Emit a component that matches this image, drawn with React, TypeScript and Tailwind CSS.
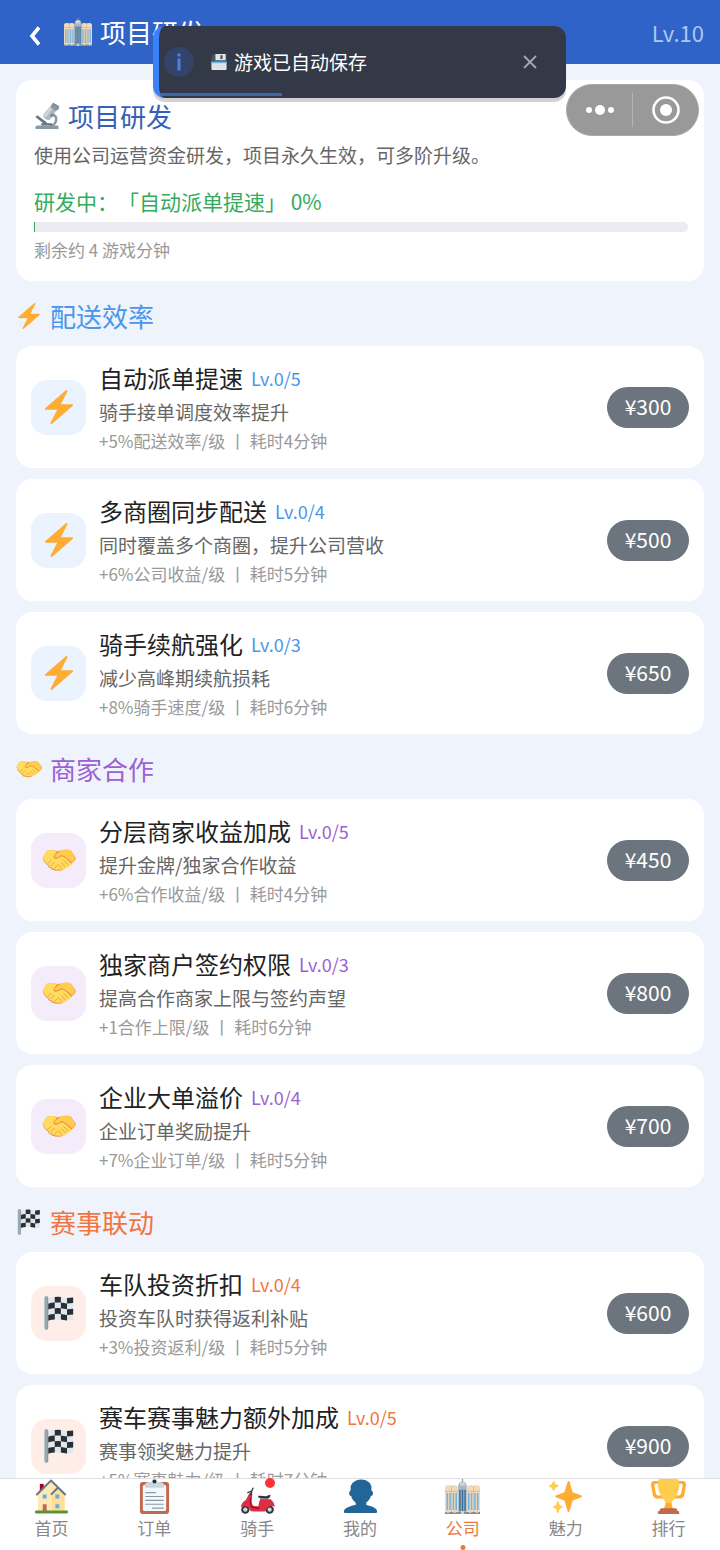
import type { ReactNode } from "react";

interface IconProps {
  className?: string;
}

interface Project {
  name: string;
  level: string;
  desc: string;
  effect: string;
  price: number;
}

interface ProjectGroup {
  title: string;
  icon: (props: IconProps) => ReactNode;
  textClass: string;
  tileClass: string;
  projects: Project[];
}

function Emoji({ className, children }: IconProps & { children: ReactNode }) {
  return (
    <svg viewBox="0 0 36 36" className={`shrink-0 ${className ?? ""}`} aria-hidden="true">
      {children}
    </svg>
  );
}

function BoltIcon({ className }: IconProps) {
  return (
    <Emoji className={className}>
      <path
        fill="#FFAC33"
        d="M32.938 15.651C32.792 15.26 32.418 15 32 15H19.925L26.89 1.458c.219-.426.106-.947-.271-1.243C26.437.071 26.218 0 26 0c-.233 0-.466.082-.653.243L18 6.588 3.347 19.243c-.316.273-.43.714-.284 1.105S3.582 21 4 21h12.075L9.11 34.542c-.219.426-.106.947.271 1.243.182.144.401.215.619.215.233 0 .466-.082.653-.243L18 29.412l14.653-12.655c.317-.273.43-.714.285-1.106z"
      />
    </Emoji>
  );
}

function HandshakeIcon({ className }: IconProps) {
  return (
    <Emoji className={className}>
      <path
        fill="#EF9645"
        d="M5 8.5Q9 6.5 14 8l4 .8 4-1Q27 6.300 31 8.500l4.500 6.500q.8 3-2.500 5.500l-3.500 2q-1 3-3.500 3-1.500 2.500-4 2.500-2 2.200-5 1-2 1.200-4-.5-3 .5-4-2-2.500-.3-3-3Q1.500 20.500.6 15.500z"
      />
      <path
        fill="#FFDC5D"
        d="M5.500 8Q10 6.500 16 8.500l-3.500 5.500q-.8 2.500 2 2.500 3 0 5.500-2.500 3 0 5.500 2.500l6 5.500q.3 2.200-2.500 1.800.3 2.500-3 2.200-.8 2.500-4 1.500-1.500 1.500-4.500.3-1.800 1.200-4-.3-2.500.5-3.500-1.800-2.800 0-3-2.500Q1.500 19.500.8 15z"
      />
      <path
        fill="#FFCC4D"
        d="M30.500 7.800Q25 6 19.500 8.200L13.500 12.500q-1 2.500 1.500 3 3-.3 5-2.500 3.500.2 6 2.500l6 5q2.800-1.800 3-5z"
      />
      <path
        fill="none"
        stroke="#EF9645"
        strokeWidth="1"
        strokeLinecap="round"
        d="M18.500 8.500l-5.500 4.500q-1 2.500 1.500 3 3.500 0 5.500-2.500 3.500.3 5.500 2.500l5.500 5M23 18.500l4.500 4.500M20.500 21l4 4M17.500 23l3 3.500M6.500 21.500l3-3M9.500 24l3.500-3.500M13.500 26.500l2.500-2.500"
      />
    </Emoji>
  );
}

function FlagIcon({ className }: IconProps) {
  return (
    <Emoji className={className}>
      <path
        fill="#E1E8ED"
        d="M6 2.400Q10 1 13.500 1 17 .5 20 1q3 .5 6.500 1 3.500 0 6.500-.5v24q-3 .5-6.500.5-3.500-.5-6.500-1-3-.5-6.500 0-3.500 0-7.500 1.400z"
      />
      <path
        fill="#292F33"
        d="M13.500 1Q17 .5 20 1v6q-3-.5-6.500 0zM26.500 2q3.500 0 6.500-.5v6q-3 .5-6.500.5zM6.500 8.200Q10 7 13.500 7v6q-3.500 0-7 1.200zM20 7q3 .5 6.500 1v6q-3.500-.5-6.500-1zM13.500 13q3.500-.5 6.500 0v6q-3-.5-6.500 0zM26.500 14q3.500 0 6.500-.5v6q-3 .5-6.500.5zM6.500 20.200Q10 19 13.500 19v6q-3.500 0-7 1.200zM20 19q3 .5 6.500 1v6q-3.500-.5-6.500-1z"
      />
      <path fill="#99AAB5" d="M2.500 2q0-2 2-2t2 2v32q0 2-2 2t-2-2z" />
      <path fill="#7C8B96" d="M5.800 1h.7v34h-.7z" />
    </Emoji>
  );
}

function BuildingIcon({ className }: IconProps) {
  return (
    <Emoji className={className}>
      <path fill="#8899A6" d="M17.400 0h1.200v4h-1.200z" />
      <path fill="#AAB8C2" d="M13.500 8q0-5.500 4.500-5.500T22.500 8v28h-9z" />
      <ellipse cx="18" cy="5" rx="3" ry="2" fill="#CCD6DD" />
      <path
        fill="#F1DAB8"
        d="M0 9q0-2 2.500-2.500Q5 6 6.800 7 8.500 6 11 6.400q2.500.6 2.500 2.600v27H0zM22.500 9q0-2 2.500-2.600 2.500-.4 4.200.6 1.800-1 4.300-.5Q36 7 36 9v27H22.500z"
      />
      <path
        fill="#D9B88F"
        d="M0 12h13.500v1H0zM22.500 12H36v1H22.500zM6.500 7h.7v29h-.7zM28.900 7h.7v29h-.7z"
      />
      <path
        fill="#6FB4E6"
        d="M1.500 14.500h1.700V32H1.500zM4.400 14.500h1.500V32H4.400zM7.900 14.500h1.500V32H7.900zM10.700 14.500h1.700V32h-1.700zM23.600 14.500h1.700V32h-1.700zM26.600 14.500h1.500V32h-1.500zM30.100 14.500h1.500V32h-1.500zM32.800 14.500h1.700V32h-1.700z"
      />
      <path fill="#3B6E96" d="M14.600 11h1.500v22h-1.500zM17.200 11h1.600v22h-1.600zM19.900 11h1.500v22h-1.500z" />
      <path fill="#8B8F92" d="M0 34h36v2H0z" />
      <path fill="#CCD6DD" d="M2 33h2v2H2zM9 33h2v2H9zM16.500 33h3v3h-3zM25 33h2v2h-2zM32 33h2v2h-2z" />
    </Emoji>
  );
}

function MicroscopeIcon({ className }: IconProps) {
  return (
    <Emoji className={className}>
      <path fill="#66757F" d="M2 19.500l2.500-2.500L18 27l-2.500 3z" />
      <path
        fill="none"
        stroke="#8899A6"
        strokeWidth="3.500"
        d="M25 15q7 3 5.500 9.500T22 32"
      />
      <path fill="#8899A6" d="M5 31h27q2 0 2 2.500V36H2v-2.500Q2 31 5 31z" />
      <path fill="#66757F" d="M10 28h15v3H10z" />
      <path fill="#AAB8C2" d="M13 16l10-12 8 6-8 12q-3 3-7 0t-3-6z" />
      <path fill="#CCD6DD" d="M14 16l9-11 3 2-9 13q-4-1-3-4z" />
      <path fill="#8899A6" d="M24 2l3-2 8 5-1 4-4 2-7-5z" />
      <path fill="#7A8994" d="M27 0l8 5-2 1-8-5z" />
      <circle cx="25" cy="17" r="2.500" fill="#7A8994" />
    </Emoji>
  );
}

function FloppyIcon({ className }: IconProps) {
  return (
    <Emoji className={className}>
      <path fill="#4A545C" d="M3 3l3-3h26q3 0 3 3v14H1V6z" />
      <path fill="#DCE5EA" d="M10 0h23v14H10z" />
      <path fill="#4A545C" d="M21 3h5v8h-5z" />
      <path fill="#E1E8ED" d="M1 18h34v16q0 2-2 2H3q-2 0-2-2z" />
      <path fill="#6DB8E8" d="M1 17h34v4H1z" />
      <path fill="#C3CFD6" d="M4 26h28v1H4zM4 30h28v1H4z" />
    </Emoji>
  );
}

function HouseIcon({ className }: IconProps) {
  return (
    <Emoji className={className}>
      <path fill="#A0041E" d="M6 5h4v8H6z" />
      <path fill="#FFE8B6" d="M4 16L17 3l14 12v18H4z" />
      <path fill="#FFD983" d="M18 16l6-6 8 7v16H19z" opacity=".6" />
      <path
        fill="none"
        stroke="#66757F"
        strokeWidth="2"
        strokeLinecap="round"
        strokeLinejoin="round"
        d="M3 16L17.500 1.500 32 16M18 15.500l6-6"
      />
      <path fill="#5FB0E0" d="M9 16h4v4H9zM22 16h4v4h-4zM22 26h4v4h-4z" />
      <path fill="#C1694F" d="M9 26h4v7H9z" />
      <path fill="#5C913B" d="M2 32.500h32q1 0 1 1.500t-1 1.500H2Q1 35.500 1 34t1-1.500z" />
    </Emoji>
  );
}

function ClipboardIcon({ className }: IconProps) {
  return (
    <Emoji className={className}>
      <path fill="#C1694F" d="M3 6q0-3 3-3h24q3 0 3 3v27q0 3-3 3H6q-3 0-3-3z" />
      <path fill="#F5F8FA" d="M6 8q0-2 2-2h20q2 0 2 2v23q0 2-2 2H8q-2 0-2-2z" />
      <path fill="#CCD6DD" d="M9 9q-1 0-1-2 0-4 5-4h2q0-3 3-3t3 3h2q5 0 5 4 0 2-1 2z" />
      <circle cx="18" cy="2.500" r="2" fill="#292F33" />
      <path
        fill="none"
        stroke="#8899A6"
        strokeWidth="1.200"
        strokeLinecap="round"
        d="M9 14h10M9 18h18M9 22h18M9 26h18M16 30h11"
      />
    </Emoji>
  );
}

function ScooterIcon({ className }: IconProps) {
  return (
    <Emoji className={className}>
      <circle cx="5.500" cy="31.500" r="4.300" fill="#31373D" />
      <circle cx="5.500" cy="31.500" r="2.200" fill="#CCD6DD" />
      <circle cx="30.500" cy="31.500" r="4.300" fill="#31373D" />
      <circle cx="30.500" cy="31.500" r="2.200" fill="#CCD6DD" />
      <path
        fill="#DD2E44"
        d="M9.500 15q2-1.500 3.200 0l-.7 7.500q0 4.500 2.500 5.300l4.500.2q.5-5.500 2-7.500l10.500.2q4.500 4 4 7.800-3.500-1.500-6.500.3-2.500 1.700-3 4.700H13q-3-.5-3.500-3.500Q7.500 26.500 1 29q0-4.500 5-7.500z"
      />
      <path
        fill="none"
        stroke="#A0041E"
        strokeWidth="1.200"
        strokeLinecap="round"
        d="M11 20q-1 8 2.500 9.500l6 .5"
      />
      <path fill="#31373D" d="M18.500 18.500q0-1.500 2-1.200l6.500.4 4-1.700q1 3-2.500 4.300l-7.500-.3z" />
      <path
        fill="none"
        stroke="#31373D"
        strokeWidth="1.400"
        strokeLinecap="round"
        d="M8 14l4-1.500 1.300-3M12 13.500l-1 3"
      />
    </Emoji>
  );
}

function PersonIcon({ className }: IconProps) {
  return (
    <Emoji className={className}>
      <path
        fill="#226699"
        d="M24 26.799v-2.566c2-1.348 4.080-3.779 4.703-6.896.186.103.206.17.413.17.991 0 1.709-1.287 1.709-2.873 0-1.562-.823-2.827-1.794-2.865.187-.674.293-1.577.293-2.735C29.324 5.168 26 .527 18.541.527c-6.629 0-10.777 4.641-10.777 8.507 0 1.123.069 2.043.188 2.755-.911.137-1.629 1.352-1.629 2.845 0 1.587.804 2.873 1.796 2.873.206 0 .025-.067.209-.17C8.952 20.453 11 22.885 13 24.232v2.414c-5 .645-12 3.437-12 6.230v1.061C1 35 2.076 35 3.137 35h29.725C33.924 35 35 35 35 33.938v-1.061c0-2.615-6-5.225-11-6.078z"
      />
    </Emoji>
  );
}

function SparklesIcon({ className }: IconProps) {
  return (
    <Emoji className={className}>
      <path
        fill="#FFAC33"
        d="M34.347 16.893l-8.899-3.294-3.323-10.891c-.128-.42-.517-.708-.956-.708-.439 0-.828.288-.956.708l-3.322 10.891-8.900 3.294c-.393.146-.653.519-.653.938 0 .418.26.793.653.938l8.895 3.293 3.324 11.223c.126.424.516.715.959.715.442 0 .833-.291.959-.716l3.324-11.223 8.896-3.293c.391-.144.652-.518.652-.937 0-.418-.261-.792-.653-.938z"
      />
      <path
        fill="#FFCC4D"
        d="M14.347 27.894l-2.314-.856-.9-3.300c-.118-.436-.513-.738-.964-.738-.451 0-.846.302-.965.737l-.9 3.300-2.313.856c-.393.146-.653.52-.653.938 0 .418.26.793.653.938l2.301.853.907 3.622c.112.444.511.756.97.756.459 0 .858-.312.97-.757l.907-3.622 2.301-.853c.393-.144.653-.519.653-.937 0-.418-.26-.793-.653-.937zM10.009 6.231l-2.364-.875-.876-2.365c-.145-.393-.519-.653-.938-.653-.418 0-.792.26-.938.653l-.875 2.365-2.365.875c-.393.146-.653.52-.653.938 0 .418.26.793.653.938l2.365.875.875 2.365c.146.393.52.653.938.653.418 0 .792-.26.938-.653l.875-2.365 2.365-.875c.393-.146.653-.52.653-.938 0-.418-.26-.792-.653-.938z"
      />
    </Emoji>
  );
}

function TrophyIcon({ className }: IconProps) {
  return (
    <Emoji className={className}>
      <path
        fill="#FFAC33"
        d="M5.123 5h6C12.227 5 13 4.896 13 6V4c0-1.104-.773-2-1.877-2h-8c-2 0-3.583 2.125-3 5 0 0 1.791 9.375 1.917 9.958C2.373 18.500 4.164 20 6.081 20h6.958c1.105 0-.039-1.896-.039-3v-2c0 1.104-.773 2-1.877 2h-4c-1.104 0-1.833-1.042-2-2S3.539 7.667 3.539 7.667C3.206 5.750 4.018 5 5.123 5zm25.812 0h-6C23.831 5 22 4.896 22 6V4c0-1.104 1.831-2 2.935-2h8c2 0 3.584 2.125 3 5 0 0-1.633 9.419-1.771 10-.354 1.500-2.042 3-4 3h-7.146C21.914 20 22 18.104 22 17v-2c0 1.104 1.831 2 2.935 2h4c1.104 0 1.834-1.042 2-2s1.584-7.333 1.584-7.333C32.851 5.750 32.040 5 30.935 5zM20.832 22c0-6.958-2.709 0-2.709 0s-3-6.958-3 0-3.291 10-3.291 10h12.292c-.001 0-3.292-3.042-3.292-10z"
      />
      <path
        fill="#FFCC4D"
        d="M29.123 6.577c0 6.775-6.770 18.423-11 18.423-4.231 0-11-11.649-11-18.423 0-5.577 1-6.577 3-6.577h16c2 0 3 1 3 6.577z"
      />
      <path
        fill="#C1694F"
        d="M27 33c0 1.104.227 2-.877 2h-16C9.018 35 9 34.104 9 33v-1c0-1.104 1.164-2 2.206-2h13.917c1.042 0 1.877.896 1.877 2v1zM29 34.625c0 .76.165 1.375-1.252 1.375H8.498C7.206 36 7 35.385 7 34.625v-.25C7 33.615 7.738 33 8.498 33h19.250c.759 0 1.252.615 1.252 1.375v.25z"
      />
    </Emoji>
  );
}

const groups: ProjectGroup[] = [
  {
    title: "配送效率",
    icon: BoltIcon,
    textClass: "text-[#4a96ea]",
    tileClass: "bg-[#eaf3fe]",
    projects: [
      { name: "自动派单提速", level: "Lv.0/5", desc: "骑手接单调度效率提升", effect: "+5%配送效率/级 丨 耗时4分钟", price: 300 },
      { name: "多商圈同步配送", level: "Lv.0/4", desc: "同时覆盖多个商圈，提升公司营收", effect: "+6%公司收益/级 丨 耗时5分钟", price: 500 },
      { name: "骑手续航强化", level: "Lv.0/3", desc: "减少高峰期续航损耗", effect: "+8%骑手速度/级 丨 耗时6分钟", price: 650 },
    ],
  },
  {
    title: "商家合作",
    icon: HandshakeIcon,
    textClass: "text-[#9d5fd3]",
    tileClass: "bg-[#f4ecfb]",
    projects: [
      { name: "分层商家收益加成", level: "Lv.0/5", desc: "提升金牌/独家合作收益", effect: "+6%合作收益/级 丨 耗时4分钟", price: 450 },
      { name: "独家商户签约权限", level: "Lv.0/3", desc: "提高合作商家上限与签约声望", effect: "+1合作上限/级 丨 耗时6分钟", price: 800 },
      { name: "企业大单溢价", level: "Lv.0/4", desc: "企业订单奖励提升", effect: "+7%企业订单/级 丨 耗时5分钟", price: 700 },
    ],
  },
  {
    title: "赛事联动",
    icon: FlagIcon,
    textClass: "text-[#f3743e]",
    tileClass: "bg-[#ffeee8]",
    projects: [
      { name: "车队投资折扣", level: "Lv.0/4", desc: "投资车队时获得返利补贴", effect: "+3%投资返利/级 丨 耗时5分钟", price: 600 },
      { name: "赛车赛事魅力额外加成", level: "Lv.0/5", desc: "赛事领奖魅力提升", effect: "+5%赛事魅力/级 丨 耗时7分钟", price: 900 },
    ],
  },
];

const tabs = [
  { label: "首页", icon: HouseIcon },
  { label: "订单", icon: ClipboardIcon },
  { label: "骑手", icon: ScooterIcon, badge: true },
  { label: "我的", icon: PersonIcon },
  { label: "公司", icon: BuildingIcon, active: true },
  { label: "魅力", icon: SparklesIcon },
  { label: "排行", icon: TrophyIcon },
];

function ProjectCard({ project, group }: { project: Project; group: ProjectGroup }) {
  const Icon = group.icon;
  return (
    <li className="flex items-center gap-[13px] rounded-2xl bg-white px-[15px] pt-[13px] pb-[13px]">
      <div className={`flex size-[55px] shrink-0 items-center justify-center rounded-2xl ${group.tileClass}`}>
        <Icon className="size-[34px]" />
      </div>
      <div className="min-w-0 flex-1">
        <div className="flex items-center gap-2">
          <h3 className="text-[24px] leading-[38px] text-[#222]">{project.name}</h3>
          <span className={`text-[18px] leading-[38px] ${group.textClass}`}>{project.level}</span>
        </div>
        <p className="text-[19px] leading-[30px] text-[#666]">{project.desc}</p>
        <p className="text-[17px] leading-[28px] text-[#999]">{project.effect}</p>
      </div>
      <button
        type="button"
        className="h-[41px] w-[82px] shrink-0 rounded-full bg-[#6c757d] text-[21px] text-white"
      >
        ¥{project.price}
      </button>
    </li>
  );
}

function Toast() {
  return (
    <div
      role="status"
      className="absolute top-[26px] left-[153px] flex h-[72px] w-[413px] items-center overflow-hidden
        rounded-xl border-l-[6px] border-[#3b82f6] bg-[#343948] pr-[27px] pl-[5px]
        shadow-[0_4px_1px_rgba(0,0,0,0.18)]"
    >
      <span className="flex size-[30px] items-center justify-center rounded-full bg-[#34436a]">
        <svg viewBox="0 0 20 20" className="size-5" fill="#4a80ee" aria-hidden="true">
          <circle cx="10" cy="3" r="1.800" />
          <rect x="8.500" y="6.500" width="3" height="12" />
        </svg>
      </span>
      <FloppyIcon className="ml-[17px] size-4" />
      <p className="ml-[7px] flex-1 text-[19px] leading-6 text-white">游戏已自动保存</p>
      <button type="button" aria-label="关闭" className="text-[#a4a8b0]">
        <svg viewBox="0 0 18 18" className="size-[18px]" aria-hidden="true">
          <path d="M3 3l12 12M15 3L3 15" stroke="currentColor" strokeWidth="1.800" />
        </svg>
      </button>
      <span className="absolute bottom-[2px] left-0 h-[3px] w-[123px] bg-[#3c67ad]" />
    </div>
  );
}

function Capsule() {
  return (
    <div
      className="absolute top-[84px] right-[21px] flex h-[52px] w-[133px] items-center
        rounded-full border border-[#a8a8a8] bg-[#999] text-white"
    >
      <button type="button" aria-label="更多" className="flex flex-1 justify-center">
        <svg viewBox="0 0 30 12" className="h-3 w-[30px]" fill="currentColor" aria-hidden="true">
          <circle cx="4" cy="6" r="3" />
          <circle cx="15" cy="6" r="5" />
          <circle cx="26" cy="6" r="3" />
        </svg>
      </button>
      <span className="h-[34px] w-px bg-[#b4b4b4]" />
      <button type="button" aria-label="退出" className="flex flex-1 justify-center">
        <svg viewBox="0 0 28 28" className="size-7" aria-hidden="true">
          <circle cx="14" cy="14" r="12.500" fill="none" stroke="currentColor" strokeWidth="2.600" />
          <circle cx="14" cy="14" r="6" fill="currentColor" />
        </svg>
      </button>
    </div>
  );
}

export default function App() {
  return (
    <div
      className="relative flex h-screen flex-col overflow-hidden bg-[#eff3fb]
        font-['Noto_Sans_CJK_SC',sans-serif]"
    >
      <header className="flex h-16 shrink-0 items-center bg-[#3063c8] pr-4 pl-[28px] text-white">
        <button type="button" aria-label="返回">
          <svg viewBox="0 0 14 20" className="mt-2 h-5 w-3.5" aria-hidden="true">
            <path d="M11 1.500L4 10l7 8.500" fill="none" stroke="currentColor" strokeWidth="3.600" />
          </svg>
        </button>
        <BuildingIcon className="ml-[22px] size-[28px]" />
        <h1 className="ml-2 flex-1 text-[26px] leading-9">项目研发</h1>
        <span className="text-[22px] text-[#a9c8f2]">Lv.10</span>
      </header>

      <main className="min-h-0 flex-1 overflow-y-auto px-4 pt-4 [scrollbar-width:none]">
        <section className="rounded-2xl bg-white pt-[18px] pr-4 pb-[17px] pl-[18px]">
          <h2 className="flex items-center gap-2 text-[26px] leading-9 text-[#3560b8]">
            <MicroscopeIcon className="size-[26px]" />
            项目研发
          </h2>
          <p className="mt-1 text-[19px] leading-[34px] text-[#666]">
            使用公司运营资金研发，项目永久生效，可多阶升级。
          </p>
          <p className="mt-3 text-[21px] leading-[34px] text-[#34ab5c] [text-spacing-trim:space-all]">
            研发中：「自动派单提速」 0%
          </p>
          <div
            role="progressbar"
            aria-label="研发进度"
            aria-valuenow={0}
            className="mt-1 h-[10px] rounded-r-md bg-[#ebebf0]"
          >
            <div className="h-full w-px bg-[#34ab5c]" />
          </div>
          <p className="mt-1 text-[17px] leading-[28px] text-[#999]">剩余约 4 游戏分钟</p>
        </section>

        {groups.map((group) => (
          <section key={group.title}>
            <h2
              className={`flex items-center gap-2 pt-[17px] pb-[12px] text-[26px] leading-9 ${group.textClass}`}
            >
              <group.icon className="size-[26px]" />
              {group.title}
            </h2>
            <ul className="flex flex-col gap-[11px]">
              {group.projects.map((project) => (
                <ProjectCard key={project.name} project={project} group={group} />
              ))}
            </ul>
          </section>
        ))}
      </main>

      <nav className="flex h-[72px] shrink-0 border-t border-[#dfdfe2] bg-white">
        {tabs.map(({ label, icon: Icon, badge, active }) => (
          <a
            key={label}
            href="#"
            className={`relative flex flex-1 flex-col items-center text-[17px] leading-6 ${
              active ? "text-[#f07838]" : "text-[#888]"
            }`}
          >
            <Icon className="size-[35px]" />
            <span className="mt-[2px]">{label}</span>
            {badge && (
              <span className="absolute -top-px left-1/2 ml-2 size-[10px] rounded-full bg-[#fb3438]" />
            )}
            {active && (
              <span className="absolute bottom-0 left-1/2 size-[5px] -translate-x-1/2 rounded-full bg-[#f07838]" />
            )}
          </a>
        ))}
      </nav>

      <Capsule />
      <Toast />
    </div>
  );
}
